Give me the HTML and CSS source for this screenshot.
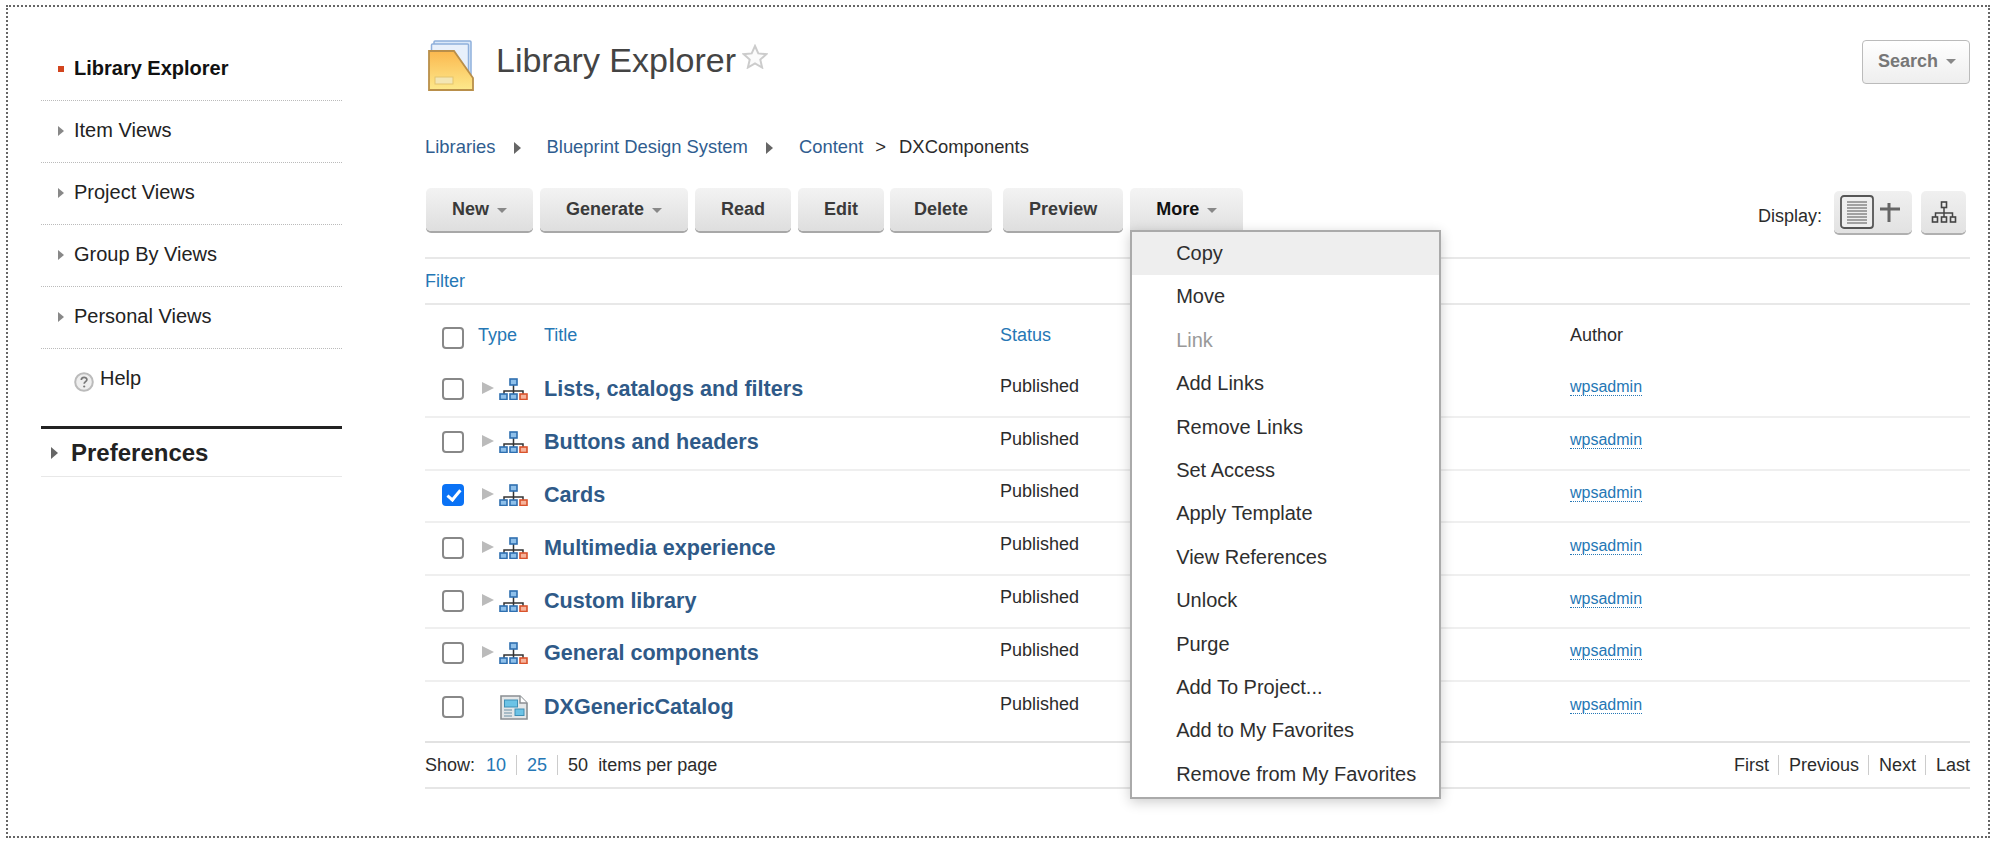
FILE: index.html
```html
<!DOCTYPE html>
<html lang="en">
<head>
    <meta charset="UTF-8">
    <title>Library Explorer</title>
    <link rel="stylesheet" href="styles.css">
</head>
<body>
    <svg class="defs" width="0" height="0">
        <symbol id="tree" viewBox="0 0 29 22">
            <path d="M14.5 7v6M5 17v-4h19v4M14.5 13v4" fill="none" stroke="#333" stroke-width="1.5"/>
            <rect x="11" y="1" width="7" height="6" fill="#8fc0ea" stroke="#2f6fb0" stroke-width="1.6"/>
            <rect x="1" y="16" width="7" height="5.5" fill="#8fc0ea" stroke="#2f6fb0" stroke-width="1.6"/>
            <rect x="11" y="16" width="7" height="5.5" fill="#8fc0ea" stroke="#2f6fb0" stroke-width="1.6"/>
            <rect x="21" y="16" width="7" height="5.5" fill="#f6b49c" stroke="#d9532c" stroke-width="1.6"/>
        </symbol>
    </svg>

    <div class="frame">
        <nav class="sidebar">
            <ul class="nav-list">
                <li class="nav-item active"><span class="nav-bullet"></span>Library Explorer</li>
                <li class="nav-item"><span class="nav-arrow"></span>Item Views</li>
                <li class="nav-item"><span class="nav-arrow"></span>Project Views</li>
                <li class="nav-item"><span class="nav-arrow"></span>Group By Views</li>
                <li class="nav-item"><span class="nav-arrow"></span>Personal Views</li>
                <li class="nav-item help">
                    <svg class="help-icon" width="20" height="20" viewBox="0 0 20 20">
                        <circle cx="10" cy="10" r="8.8" fill="#eee" stroke="#bbb" stroke-width="2"/>
                        <path d="M7.3 8c0-3.400 5.600-3.400 5.600-.3 0 1.900-2.700 2-2.700 4" fill="none" stroke="#777" stroke-width="1.700"/>
                        <circle cx="10.200" cy="14.500" r="1.100" fill="#777"/>
                    </svg>
                    Help
                </li>
            </ul>
            <div class="prefs"><span class="prefs-arrow"></span>Preferences</div>
        </nav>

        <main class="content">
            <header class="page-head">
                <svg class="lib-icon" width="46" height="51" viewBox="0 0 46 51">
                    <rect x="6" y="1" width="37" height="40" rx="1" fill="#dbe8f8" stroke="#8fb0dc" stroke-width="1.500"/>
                    <rect x="3.500" y="4" width="37" height="40" rx="1" fill="#e8f0fb" stroke="#8fb0dc" stroke-width="1.500"/>
                    <defs>
                        <linearGradient id="folder" x1="0" y1="0" x2="0" y2="1">
                            <stop offset="0" stop-color="#fbb84e"/>
                            <stop offset="1" stop-color="#fde98c"/>
                        </linearGradient>
                    </defs>
                    <path d="M1 11h25l19 27v12H1z" fill="url(#folder)" stroke="#b98f4a" stroke-width="1.800"/>
                    <rect x="7" y="37" width="18" height="7" fill="#f3e6b4" stroke="#e3c46e"/>
                </svg>
                <h1 class="page-title">Library Explorer</h1>
                <svg class="star" width="26" height="25" viewBox="0 0 26 25">
                    <path d="M13 2l3.300 7.400 8 .8-6 5.400 1.800 7.900-7.100-4.100-7.100 4.100 1.800-7.900-6-5.400 8-.8z" fill="#fbfbfb" stroke="#ccc" stroke-width="2"/>
                </svg>
                <button class="search-btn">Search<span class="caret"></span></button>
            </header>

            <div class="crumbs">
                <a class="crumb">Libraries</a><span class="crumb-arrow"></span>
                <a class="crumb">Blueprint Design System</a><span class="crumb-arrow"></span>
                <a class="crumb">Content</a><span class="crumb-gt">&gt;</span>
                <span>DXComponents</span>
            </div>

            <div class="toolbar">
                <button class="btn">New<span class="caret"></span></button>
                <button class="btn">Generate<span class="caret"></span></button>
                <button class="btn">Read</button>
                <button class="btn">Edit</button>
                <button class="btn btn-tight">Delete</button>
                <button class="btn btn-spaced">Preview</button>
                <div class="more">
                    <button class="btn btn-open">More<span class="caret"></span></button>
                    <ul class="menu">
                        <li class="menu-item hover">Copy</li>
                        <li class="menu-item">Move</li>
                        <li class="menu-item disabled">Link</li>
                        <li class="menu-item">Add Links</li>
                        <li class="menu-item">Remove Links</li>
                        <li class="menu-item">Set Access</li>
                        <li class="menu-item">Apply Template</li>
                        <li class="menu-item">View References</li>
                        <li class="menu-item">Unlock</li>
                        <li class="menu-item">Purge</li>
                        <li class="menu-item">Add To Project...</li>
                        <li class="menu-item">Add to My Favorites</li>
                        <li class="menu-item">Remove from My Favorites</li>
                    </ul>
                </div>
                <div class="display">
                    <span class="display-label">Display:</span>
                    <button class="btn-icon wide">
                        <svg width="66" height="34" viewBox="0 0 66 34">
                            <rect x="1" y="1" width="32" height="32" rx="3" fill="#eee" stroke="#555" stroke-width="1.800"/>
                            <path d="M7 7h20M7 10h20M7 13h20M7 16h20M7 19h20M7 22h20M7 25h20M7 28h20" stroke="#888" stroke-width="1.400"/>
                            <path d="M40 14h20M49 8v19" stroke="#666" stroke-width="3"/>
                        </svg>
                    </button>
                    <button class="btn-icon">
                        <svg width="26" height="22" viewBox="0 0 26 22">
                            <path d="M13 7v5M4.500 16v-4h17v4M13 12v4" fill="none" stroke="#444" stroke-width="1.500"/>
                            <rect x="10.500" y="1" width="5" height="5.500" fill="none" stroke="#444" stroke-width="1.600"/>
                            <rect x="1.500" y="16" width="5" height="5" fill="none" stroke="#444" stroke-width="1.600"/>
                            <rect x="10.500" y="16" width="5" height="5" fill="none" stroke="#444" stroke-width="1.600"/>
                            <rect x="19.500" y="16" width="5" height="5" fill="none" stroke="#444" stroke-width="1.600"/>
                        </svg>
                    </button>
                </div>
            </div>

            <div class="filter-row"><a class="link">Filter</a></div>

            <div class="list-head">
                <span class="cell-check"><input type="checkbox" class="check"></span>
                <a class="link">Type</a>
                <a class="link">Title</a>
                <a class="link">Status</a>
                <span>Author</span>
            </div>

            <div class="list-row">
                <span class="cell-check"><input type="checkbox" class="check"></span>
                <span class="cell-type"><span class="row-arrow"></span><svg class="tree" width="29" height="22"><use href="#tree"/></svg></span>
                <a class="row-title">Lists, catalogs and filters</a>
                <span class="cell-status">Published</span>
                <span class="cell-author"><a class="author">wpsadmin</a></span>
            </div>
            <div class="list-row">
                <span class="cell-check"><input type="checkbox" class="check"></span>
                <span class="cell-type"><span class="row-arrow"></span><svg class="tree" width="29" height="22"><use href="#tree"/></svg></span>
                <a class="row-title">Buttons and headers</a>
                <span class="cell-status">Published</span>
                <span class="cell-author"><a class="author">wpsadmin</a></span>
            </div>
            <div class="list-row">
                <span class="cell-check"><input type="checkbox" class="check" checked></span>
                <span class="cell-type"><span class="row-arrow"></span><svg class="tree" width="29" height="22"><use href="#tree"/></svg></span>
                <a class="row-title">Cards</a>
                <span class="cell-status">Published</span>
                <span class="cell-author"><a class="author">wpsadmin</a></span>
            </div>
            <div class="list-row">
                <span class="cell-check"><input type="checkbox" class="check"></span>
                <span class="cell-type"><span class="row-arrow"></span><svg class="tree" width="29" height="22"><use href="#tree"/></svg></span>
                <a class="row-title">Multimedia experience</a>
                <span class="cell-status">Published</span>
                <span class="cell-author"><a class="author">wpsadmin</a></span>
            </div>
            <div class="list-row">
                <span class="cell-check"><input type="checkbox" class="check"></span>
                <span class="cell-type"><span class="row-arrow"></span><svg class="tree" width="29" height="22"><use href="#tree"/></svg></span>
                <a class="row-title">Custom library</a>
                <span class="cell-status">Published</span>
                <span class="cell-author"><a class="author">wpsadmin</a></span>
            </div>
            <div class="list-row">
                <span class="cell-check"><input type="checkbox" class="check"></span>
                <span class="cell-type"><span class="row-arrow"></span><svg class="tree" width="29" height="22"><use href="#tree"/></svg></span>
                <a class="row-title">General components</a>
                <span class="cell-status">Published</span>
                <span class="cell-author"><a class="author">wpsadmin</a></span>
            </div>
            <div class="list-row last">
                <span class="cell-check"><input type="checkbox" class="check"></span>
                <span class="cell-type">
                    <svg class="catalog" width="28" height="25" viewBox="0 0 28 25">
                        <path d="M1 1h19l7 7v16H1z" fill="#e4e7e8" stroke="#8a8f92" stroke-width="1.600"/>
                        <path d="M20 1v7h7" fill="#fff" stroke="#8a8f92" stroke-width="1.400"/>
                        <rect x="4.500" y="5" width="13" height="7" fill="#6cc3e6" stroke="#3f8fb5"/>
                        <rect x="15" y="14" width="9" height="6.500" fill="#6cc3e6" stroke="#3f8fb5"/>
                        <path d="M4 15h8M4 18h8M4 21h8" stroke="#6b8fa3" stroke-width="1.200"/>
                    </svg>
                </span>
                <a class="row-title">DXGenericCatalog</a>
                <span class="cell-status">Published</span>
                <span class="cell-author"><a class="author">wpsadmin</a></span>
            </div>

            <div class="pager">
                <div class="pager-sizes">
                    <span class="pager-label">Show:</span>
                    <a class="size link">10</a>
                    <a class="size link">25</a>
                    <span class="size">50</span>
                    <span>items per page</span>
                </div>
                <div class="pager-pages">
                    <span class="page">First</span>
                    <span class="page">Previous</span>
                    <span class="page">Next</span>
                    <span class="page">Last</span>
                </div>
            </div>
        </main>
    </div>
</body>
</html>
```

FILE: styles.css
```css
body {
    margin: 0;
    font-family: "Liberation Sans", Arial, sans-serif;
    font-size: 18px;
    color: #2b2b2b;
    background: #fff;
    overflow: hidden;
}

ul {
    margin: 0;
    padding: 0;
    list-style: none;
}

button {
    font-family: inherit;
}

.defs {
    position: absolute;
}

.frame {
    display: flex;
    box-sizing: border-box;
    width: 1984px;
    height: 833px;
    margin: 5px 0 0 6px;
    border: 2px dotted #666;
}

/* left nav */
.sidebar {
    width: 301px;
    margin-left: 33px;
    padding-top: 32px;
    flex-shrink: 0;
}

.nav-item {
    display: flex;
    align-items: center;
    box-sizing: border-box;
    height: 62px;
    padding-left: 17px;
    padding-bottom: 2px;
    font-size: 20px;
    color: #222;
    border-bottom: 1px dotted #bbb;
}

.nav-item.active {
    font-weight: bold;
    color: #111;
}

.nav-bullet {
    width: 6px;
    height: 6px;
    margin-right: 10px;
    background: #d2451e;
}

.nav-arrow {
    width: 0;
    height: 0;
    margin-right: 10px;
    border-left: 6px solid #888;
    border-top: 5px solid transparent;
    border-bottom: 5px solid transparent;
}

.nav-item.help {
    padding-left: 33px;
    padding-bottom: 4px;
    border-bottom: none;
    margin-bottom: 15px;
}

.help-icon {
    margin-right: 6px;
    margin-top: 7px;
}

.prefs {
    display: flex;
    align-items: center;
    box-sizing: border-box;
    height: 51px;
    padding-left: 10px;
    font-size: 24px;
    font-weight: bold;
    color: #222;
    border-top: 3px solid #222;
    border-bottom: 1px solid #e8e8e8;
}

.prefs-arrow {
    width: 0;
    height: 0;
    margin-right: 13px;
    border-left: 7px solid #666;
    border-top: 6px solid transparent;
    border-bottom: 6px solid transparent;
}

/* main column */
.content {
    width: 1545px;
    margin-left: 83px;
    padding-top: 33px;
}

.page-head {
    display: flex;
    align-items: flex-start;
    height: 85px;
}

.lib-icon {
    margin: 0 0 0 3px;
}

.page-title {
    margin: 0 6px 0 22px;
    font-size: 34px;
    font-weight: normal;
    line-height: 40px;
    color: #444;
}

.star {
    margin-top: 4px;
}

.search-btn {
    margin-left: auto;
    height: 44px;
    padding: 0 13px 2px 15px;
    font-size: 18px;
    font-weight: bold;
    color: #777;
    background: linear-gradient(#fff, #eee);
    border: 1px solid #bbb;
    border-radius: 4px;
}

.caret {
    display: inline-block;
    margin-left: 8px;
    vertical-align: middle;
    border-top: 5px solid #888;
    border-left: 5px solid transparent;
    border-right: 5px solid transparent;
}

.crumbs {
    display: flex;
    align-items: center;
    height: 44px;
    margin-bottom: 19px;
    font-size: 18.4px;
}

.crumb {
    color: #2f5d8f;
}

.crumb-arrow {
    margin: 2px 26px 0 18px;
    border-left: 7px solid #666;
    border-top: 6px solid transparent;
    border-bottom: 6px solid transparent;
}

.crumb-gt {
    margin: 0 13px 0 12px;
}

.toolbar {
    display: flex;
    gap: 7px;
    box-sizing: border-box;
    height: 71px;
    padding-left: 1px;
    border-bottom: 2px solid #e8e8e8;
}

.btn {
    height: 43px;
    padding: 0 26px;
    font-size: 18px;
    font-weight: bold;
    color: #3a3a3a;
    white-space: nowrap;
    background: linear-gradient(#f3f3f3, #dedede);
    border: none;
    border-radius: 5px;
    box-shadow: 0 2px 0 #a8a8a8;
}

.btn-tight {
    margin-left: -1px;
    padding: 0 24px;
}

.btn-spaced {
    margin-left: 4px;
}

.more {
    position: relative;
}

.btn-open {
    height: 46px;
    padding-bottom: 3px;
    color: #111;
    background: linear-gradient(#f4f4f4, #e0e0e0);
    box-shadow: none;
    border-radius: 5px 5px 0 0;
}

.menu {
    position: absolute;
    top: 42px;
    left: 0;
    z-index: 2;
    box-sizing: border-box;
    width: 311px;
    padding-bottom: 1px;
    background: #fff;
    border: 2px solid #aaa;
    box-shadow: 0 3px 12px rgba(0, 0, 0, 0.2);
}

.menu-item {
    height: 43.4px;
    padding-left: 44px;
    font-size: 20px;
    line-height: 43px;
    color: #2e2e2e;
}

.menu-item.hover {
    background: #eee;
}

.menu-item.disabled {
    color: #999;
}

.display {
    display: flex;
    align-items: center;
    align-self: flex-start;
    margin-left: auto;
    margin-top: 3px;
    margin-right: 4px;
}

.display-label {
    margin-right: 12px;
    margin-top: 9px;
}

.btn-icon {
    display: flex;
    align-items: center;
    justify-content: center;
    width: 45px;
    height: 42px;
    padding: 0;
    background: linear-gradient(#f0f0f0, #e2e2e2);
    border: none;
    border-radius: 5px;
    box-shadow: 0 2px 0 #b0b0b0;
}

.btn-icon.wide {
    width: 78px;
    margin-right: 9px;
}

.link {
    color: #2577b5;
}

.filter-row {
    display: flex;
    align-items: center;
    box-sizing: border-box;
    height: 46px;
    border-bottom: 2px solid #e8e8e8;
}

/* list */
.list-head,
.list-row {
    display: grid;
    grid-template-columns: 53px 66px 456px 570px 1fr;
    align-items: center;
    box-sizing: border-box;
}

.list-head {
    height: 60px;
}

.list-head .check {
    margin-top: 5px;
}

.list-row {
    height: 52.8px;
    padding-bottom: 2px;
    border-bottom: 2px solid #efefef;
}

.list-row.last {
    height: 61px;
    padding-bottom: 8px;
    border-bottom-color: #e2e2e2;
}

.cell-check {
    display: flex;
    padding-left: 17px;
}

.check {
    appearance: none;
    position: relative;
    box-sizing: border-box;
    width: 22px;
    height: 22px;
    margin: 0;
    background: #fff;
    border: 2px solid #888;
    border-radius: 4px;
}

.check:checked {
    background: #0a72f5;
    border-color: #0a72f5;
}

.check:checked::after {
    content: "";
    position: absolute;
    left: 5.5px;
    top: 1px;
    width: 5px;
    height: 11px;
    border: solid #fff;
    border-width: 0 3px 3px 0;
    transform: rotate(40deg);
}

.cell-type {
    display: flex;
    align-items: center;
}

.row-arrow {
    margin-left: 4px;
    margin-right: 5px;
    margin-top: -2px;
    border-left: 12px solid #bbb;
    border-top: 6.5px solid transparent;
    border-bottom: 6.5px solid transparent;
}

.catalog {
    margin-left: 22px;
}

.row-title {
    font-size: 21.6px;
    font-weight: bold;
    color: #2f5a88;
}

.cell-status {
    margin-bottom: 6px;
}

.cell-author {
    margin-bottom: 5px;
}

.author {
    font-size: 16px;
    color: #2577b5;
    border-bottom: 1px dotted #2577b5;
}

/* pager */
.pager {
    display: flex;
    justify-content: space-between;
    align-items: center;
    box-sizing: border-box;
    height: 46px;
    padding-top: 1px;
    border-bottom: 2px solid #e6e6e6;
}

.pager-sizes,
.pager-pages {
    display: flex;
    align-items: center;
}

.pager-label {
    margin-right: 11px;
}

.size {
    padding-right: 10px;
    margin-right: 10px;
    line-height: 20px;
    border-right: 1px solid #ccc;
}

.size:nth-child(4) {
    border-right: none;
    padding-right: 0;
}

.page {
    padding: 0 9.5px;
    line-height: 20px;
    border-right: 1px solid #ccc;
}

.page:last-child {
    padding-right: 0;
    border-right: none;
}
```
